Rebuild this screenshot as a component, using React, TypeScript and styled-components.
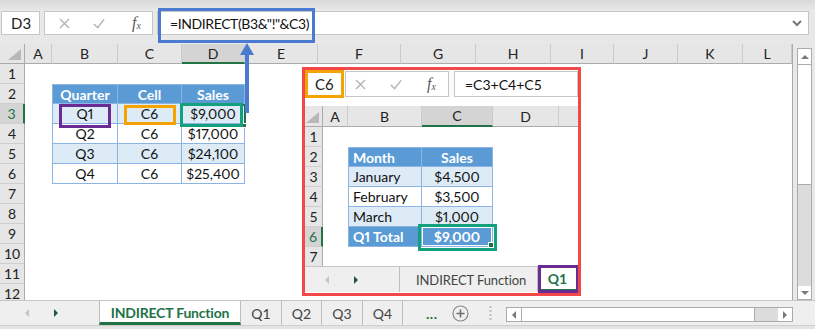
import React from 'react';
import styled, { createGlobalStyle, css } from 'styled-components';

const GREEN = '#217346';
const TABLE_BLUE = '#5b9bd5';
const BAND = '#ddebf7';
const LINE = '#8db4e2';
const FONT = 'Lato, "Open Sans", "Liberation Sans", sans-serif';

const GlobalStyle = createGlobalStyle`
  html, body { margin: 0; padding: 0; }
  body { background: #e8e8e8; font-family: ${FONT}; overflow: hidden; }
  * { box-sizing: border-box; }
`;

type Col = { label: string; width: number };
type Tone = 'head' | 'band' | 'plain' | 'total';
type CellSpec = { text: string; tone: Tone; align: 'left' | 'center'; left: boolean; top: boolean; active?: boolean };

const MAIN_COLS: Col[] = [
  { label: 'A', width: 27 }, { label: 'B', width: 66 }, { label: 'C', width: 64 }, { label: 'D', width: 63 },
  { label: 'E', width: 73 }, { label: 'F', width: 83 }, { label: 'G', width: 75 }, { label: 'H', width: 75 },
  { label: 'I', width: 63 }, { label: 'J', width: 64 }, { label: 'K', width: 65 }, { label: 'L', width: 49 },
];
const INNER_COLS: Col[] = [
  { label: 'A', width: 25 }, { label: 'B', width: 74 }, { label: 'C', width: 71 }, { label: 'D', width: 66 }, { label: '', width: 60 },
];

const MAIN_TABLE = [
  ['Quarter', 'Cell', 'Sales'],
  ['Q1', 'C6', '$9,000'],
  ['Q2', 'C6', '$17,000'],
  ['Q3', 'C6', '$24,100'],
  ['Q4', 'C6', '$25,400'],
];
const INNER_TABLE = [
  ['Month', 'Sales'],
  ['January', '$4,500'],
  ['February', '$3,500'],
  ['March', '$1,000'],
  ['Q1 Total', '$9,000'],
];

const mainCell = (r: number, c: number): CellSpec | null => {
  if (r < 2 || r > 6 || c < 1 || c > 3) return null;
  return {
    text: MAIN_TABLE[r - 2][c - 1],
    tone: r === 2 ? 'head' : r % 2 === 1 ? 'band' : 'plain',
    align: 'center',
    left: c === 1,
    top: r === 2,
  };
};
const innerCell = (r: number, c: number): CellSpec | null => {
  if (r < 2 || r > 6 || c < 1 || c > 2) return null;
  return {
    text: INNER_TABLE[r - 2][c - 1],
    tone: r === 2 ? 'head' : r === 6 ? 'total' : r % 2 === 1 ? 'band' : 'plain',
    align: c === 1 ? 'left' : 'center',
    left: c === 1,
    top: r === 2,
    active: r === 6 && c === 2,
  };
};

/* ---------- frame ---------- */

const Screen = styled.div`
  position: relative;
  width: 815px;
  height: 329px;
  display: flex;
  flex-direction: column;
  background: #e8e8e8;
  overflow: hidden;
  font-family: ${FONT};
`;

const TopStrip = styled.div`
  height: 11px;
  flex: none;
  background: linear-gradient(#d9d9d9, #e9e9e9);
`;

/* ---------- formula bar ---------- */

const FormulaRow = styled.div<{ $h: number; $mt: number; $mb: number; $pl: number; $pr: number; $bg: string }>`
  display: flex;
  align-items: stretch;
  flex: none;
  height: ${p => p.$h}px;
  margin: ${p => p.$mt}px 0 ${p => p.$mb}px 0;
  padding: 0 ${p => p.$pr}px 0 ${p => p.$pl}px;
  background: ${p => p.$bg};
`;

const NameBox = styled.div<{ $w: number }>`
  width: ${p => p.$w}px;
  flex: none;
  display: flex;
  align-items: center;
  padding-left: 9px;
  background: #fff;
  border: 1px solid #c6c6c6;
  font-size: 15px;
  color: #222;
`;

const FxBox = styled.div<{ $w: number; $ml: number; $pl: number; $gap: number }>`
  width: ${p => p.$w}px;
  margin-left: ${p => p.$ml}px;
  flex: none;
  display: flex;
  align-items: center;
  gap: ${p => p.$gap}px;
  padding-left: ${p => p.$pl}px;
  background: #fff;
  border: 1px solid #c6c6c6;
`;

const IconSlot = styled.span`
  width: 12px;
  height: 12px;
  display: flex;
  align-items: center;
  justify-content: center;
`;

const Fx = styled.span<{ $ml: number }>`
  width: 14px;
  margin-left: ${p => p.$ml}px;
  font-family: "Liberation Serif", "DejaVu Serif", serif;
  font-style: italic;
  font-size: 16px;
  color: #5a5a5a;
  line-height: 1;
  sub {
    font-size: 10px;
    vertical-align: baseline;
    position: relative;
    top: 1px;
  }
`;

const FormulaInput = styled.div<{ $ml: number; $pl: number; $fs: number; $ls: number }>`
  flex: 1;
  margin-left: ${p => p.$ml}px;
  display: flex;
  align-items: center;
  justify-content: space-between;
  padding: 0 6px 0 ${p => p.$pl}px;
  background: #fff;
  border: 1px solid #c6c6c6;
  font-size: ${p => p.$fs}px;
  letter-spacing: ${p => p.$ls}px;
  color: #111;
  white-space: nowrap;
`;

/* ---------- grid ---------- */

const SheetArea = styled.div`
  display: flex;
  align-items: flex-start;
  flex: none;
  height: 256px;
`;

const GridFrame = styled.div<{ $cols: string; $headH: number; $rowH: number; $h: number; $edge: boolean }>`
  display: grid;
  grid-template-columns: ${p => p.$cols};
  grid-template-rows: ${p => p.$headH}px;
  grid-auto-rows: ${p => p.$rowH}px;
  align-content: start;
  height: ${p => p.$h}px;
  flex: none;
  overflow: hidden;
  background: #fff;
  border-right: ${p => (p.$edge ? '1px solid #ababab' : 'none')};
`;

const Corner = styled.div`
  position: relative;
  background: #e6e6e6;
  border-right: 1px solid #ababab;
  border-bottom: 1px solid #ababab;
  &::after {
    content: '';
    position: absolute;
    right: 3px;
    bottom: 3px;
    border-left: 13px solid transparent;
    border-bottom: 11px solid #b8b8b8;
  }
`;

const ColHead = styled.div<{ $sel: boolean }>`
  display: flex;
  align-items: center;
  justify-content: center;
  font-size: 14px;
  color: #222;
  background: ${p => (p.$sel ? '#d4d4d4' : '#e6e6e6')};
  border-right: 1px solid #cbcbcb;
  border-bottom: ${p => (p.$sel ? `2px solid ${GREEN}` : '1px solid #ababab')};
  white-space: nowrap;
`;

const RowHead = styled.div<{ $sel: boolean }>`
  display: flex;
  align-items: center;
  justify-content: center;
  font-size: 14px;
  color: ${p => (p.$sel ? GREEN : '#222')};
  background: ${p => (p.$sel ? '#d4d4d4' : '#e6e6e6')};
  border-bottom: 1px solid #cfcfcf;
  border-right: ${p => (p.$sel ? `2px solid ${GREEN}` : '1px solid #ababab')};
`;

const Blank = styled.div`
  background: #fff;
`;

const TableCell = styled.div<{ $tone: Tone; $align: 'left' | 'center'; $left: boolean; $top: boolean; $active?: boolean }>`
  position: relative;
  display: flex;
  align-items: center;
  justify-content: ${p => (p.$align === 'left' ? 'flex-start' : 'center')};
  padding: 0 4px;
  font-size: 14px;
  font-variant-numeric: proportional-nums;
  white-space: nowrap;
  background: ${p => (p.$tone === 'head' || p.$tone === 'total' ? TABLE_BLUE : p.$tone === 'band' ? BAND : '#fff')};
  color: ${p => (p.$tone === 'head' || p.$tone === 'total' ? '#fff' : '#111')};
  font-weight: ${p => (p.$tone === 'head' || p.$tone === 'total' ? 700 : 400)};
  border-right: 1px solid ${LINE};
  border-bottom: 1px solid ${LINE};
  border-left: ${p => (p.$left ? `1px solid ${LINE}` : 'none')};
  border-top: ${p => (p.$top ? `1px solid ${LINE}` : 'none')};
  ${p =>
    p.$active &&
    css`
      box-shadow: inset 0 0 0 1px #ffffff;
      &::after {
        content: '';
        position: absolute;
        right: -2px;
        bottom: -2px;
        width: 4px;
        height: 4px;
        background: #1d6f42;
        border: 1px solid #fff;
      }
    `}
`;

type GridProps = {
  cols: Col[];
  rowHeadW: number;
  headH: number;
  rowH: number;
  rows: number;
  height: number;
  selCol: number;
  selRow: number;
  edge: boolean;
  cell: (r: number, c: number) => CellSpec | null;
};

function SheetGrid({ cols, rowHeadW, headH, rowH, rows, height, selCol, selRow, edge, cell }: GridProps) {
  const template = [rowHeadW, ...cols.map(c => c.width)].map(w => `${w}px`).join(' ');
  const items: React.ReactNode[] = [<Corner key="corner" />];
  cols.forEach((c, i) =>
    items.push(
      <ColHead key={`h${i}`} $sel={i === selCol}>
        {c.label}
      </ColHead>,
    ),
  );
  for (let r = 1; r <= rows; r++) {
    items.push(
      <RowHead key={`r${r}`} $sel={r === selRow}>
        {r}
      </RowHead>,
    );
    cols.forEach((_, c) => {
      const spec = cell(r, c);
      items.push(
        spec ? (
          <TableCell key={`c${r}-${c}`} $tone={spec.tone} $align={spec.align} $left={spec.left} $top={spec.top} $active={spec.active}>
            {spec.text}
          </TableCell>
        ) : (
          <Blank key={`c${r}-${c}`} />
        ),
      );
    });
  }
  return (
    <GridFrame $cols={template} $headH={headH} $rowH={rowH} $h={height} $edge={edge}>
      {items}
    </GridFrame>
  );
}

/* ---------- scrollbars ---------- */

const VScroll = styled.div`
  width: 15px;
  height: 252px;
  margin: 4px 0 0 4px;
  display: flex;
  flex-direction: column;
  flex: none;
  background: #dcdcdc;
  border: 1px solid #ababab;
`;

const ScrollBtn = styled.div<{ $size: number; $vertical: boolean }>`
  flex: none;
  ${p => (p.$vertical ? `height: ${p.$size}px;` : `width: ${p.$size}px;`)}
  display: flex;
  align-items: center;
  justify-content: center;
  background: #fff;
`;

const Thumb = styled.div<{ $size: number; $vertical: boolean }>`
  flex: none;
  ${p => (p.$vertical ? `height: ${p.$size}px;` : `width: ${p.$size}px;`)}
  background: #fff;
  ${p =>
    p.$vertical
      ? 'border-top: 1px solid #ababab; border-bottom: 1px solid #ababab;'
      : 'border-left: 1px solid #ababab; border-right: 1px solid #ababab;'}
`;

const Track = styled.div`
  flex: 1;
`;

const HScroll = styled.div`
  width: 287px;
  height: 15px;
  margin-top: 6px;
  align-self: flex-start;
  display: flex;
  flex: none;
  background: #dcdcdc;
  border: 1px solid #ababab;
`;

const Arrow = ({ dir, color }: { dir: 'up' | 'down' | 'left' | 'right'; color: string }) => {
  const pts = {
    up: '0,5 4,1 8,5',
    down: '0,1 4,5 8,1',
    left: '5,0 1,4 5,8',
    right: '1,0 5,4 1,8',
  }[dir];
  const horizontal = dir === 'left' || dir === 'right';
  return (
    <svg width={horizontal ? 6 : 8} height={horizontal ? 8 : 6} viewBox={horizontal ? '0 0 6 8' : '0 0 8 6'}>
      <polygon points={pts} fill={color} />
    </svg>
  );
};

/* ---------- tab bars ---------- */

const TabBar = styled.div<{ $h: number }>`
  display: flex;
  align-items: stretch;
  flex: none;
  height: ${p => p.$h}px;
  background: #efefef;
  border-top: 1px solid #c6c6c6;
`;

const TabNav = styled.div<{ $w: number; $pl: number }>`
  width: ${p => p.$w}px;
  flex: none;
  display: flex;
  align-items: center;
  gap: 23px;
  padding-left: ${p => p.$pl}px;
`;

const Tab = styled.div<{ $w?: number; $active?: boolean; $first?: boolean; $fs: number; $pl?: number; $ls?: number }>`
  ${p => (p.$w ? `width: ${p.$w}px; flex: none;` : 'flex: 1;')}
  display: flex;
  align-items: center;
  justify-content: ${p => (p.$pl !== undefined ? 'flex-start' : 'center')};
  padding-left: ${p => p.$pl ?? 0}px;
  padding-top: ${p => (p.$active ? 1 : 0)}px;
  font-size: ${p => p.$fs}px;
  letter-spacing: ${p => p.$ls ?? 0}px;
  white-space: nowrap;
  color: ${p => (p.$active ? GREEN : '#444')};
  font-weight: ${p => (p.$active ? 700 : 400)};
  background: ${p => (p.$active ? '#fff' : 'transparent')};
  border-right: 1px solid #bdbdbd;
  border-left: ${p => (p.$first ? '1px solid #bdbdbd' : 'none')};
  border-bottom: ${p => (p.$active ? `3px solid ${GREEN}` : 'none')};
`;

const TabExtras = styled.div`
  width: 103px;
  flex: none;
  display: flex;
  align-items: center;
  padding-left: 23px;
`;

const More = styled.span`
  width: 14px;
  color: ${GREEN};
  font-weight: 700;
  font-size: 14px;
  letter-spacing: 0.5px;
  margin-top: 1px;
`;

const AddSheet = styled.span`
  display: flex;
  margin-left: 12px;
`;

const GripWrap = styled.span`
  display: flex;
  margin-left: 20px;
`;

const BottomStrip = styled.div`
  flex: 1;
  background: #e3e3e3;
  border-top: 1px solid #cfcfcf;
`;

/* ---------- overlays ---------- */

const Mark = styled.div<{ $x: number; $y: number; $w: number; $h: number; $color: string; $bw?: number }>`
  position: absolute;
  left: ${p => p.$x}px;
  top: ${p => p.$y}px;
  width: ${p => p.$w}px;
  height: ${p => p.$h}px;
  border: ${p => p.$bw ?? 3}px solid ${p => p.$color};
  pointer-events: none;
`;

const Handle = styled.div<{ $x: number; $y: number }>`
  position: absolute;
  left: ${p => p.$x}px;
  top: ${p => p.$y}px;
  width: 5px;
  height: 5px;
  background: ${GREEN};
  border: 1px solid #fff;
`;

const PointerArrow = styled.svg`
  position: absolute;
  left: 239px;
  top: 42px;
`;

const Inset = styled.div`
  position: absolute;
  left: 302px;
  top: 67px;
  width: 279px;
  height: 229px;
  border: 3px solid #f34848;
  background: #fff;
  display: flex;
  flex-direction: column;
  overflow: hidden;
`;

const InsetGridWrap = styled.div`
  margin-top: 9px;
  height: 160px;
  overflow: hidden;
  flex: none;
`;

const CancelIcon = () => (
  <svg width="11" height="11" viewBox="0 0 11 11">
    <path d="M1 1 L10 10 M10 1 L1 10" stroke="#b3b3b3" strokeWidth="1.4" fill="none" />
  </svg>
);
const ConfirmIcon = () => (
  <svg width="13" height="11" viewBox="0 0 13 11">
    <path d="M1 6 L5 10 L12 1" stroke="#b3b3b3" strokeWidth="1.6" fill="none" />
  </svg>
);
const Chevron = () => (
  <svg width="10" height="7" viewBox="0 0 10 7">
    <path d="M1 1 L5 5 L9 1" stroke="#777" strokeWidth="2" fill="none" />
  </svg>
);
const PlusCircle = () => (
  <svg width="17" height="17" viewBox="0 0 17 17">
    <circle cx="8.5" cy="8.5" r="7.5" stroke="#8a8a8a" strokeWidth="1.2" fill="none" />
    <path d="M8.5 4.5 V12.5 M4.5 8.5 H12.5" stroke="#6f6f6f" strokeWidth="1.6" />
  </svg>
);
const Grip = () => (
  <svg width="3" height="14" viewBox="0 0 3 14">
    {[1, 5, 9, 13].map(y => (
      <rect key={y} x="0.5" y={y - 1} width="2" height="2" fill="#bdbdbd" />
    ))}
  </svg>
);

export default function App() {
  return (
    <>
      <GlobalStyle />
      <Screen>
        <TopStrip />
        <FormulaRow $h={24} $mt={0} $mb={9} $pl={1} $pr={6} $bg="transparent">
          <NameBox $w={39}>D3</NameBox>
          <FxBox $w={109} $ml={4} $pl={13} $gap={23}>
            <IconSlot>
              <CancelIcon />
            </IconSlot>
            <IconSlot>
              <ConfirmIcon />
            </IconSlot>
            <Fx $ml={4}>
              f<sub>x</sub>
            </Fx>
          </FxBox>
          <FormulaInput $ml={4} $pl={12} $fs={14} $ls={-0.4}>
            <span>=INDIRECT(B3&amp;"!"&amp;C3)</span>
            <Chevron />
          </FormulaInput>
        </FormulaRow>

        <SheetArea>
          <SheetGrid
            cols={MAIN_COLS}
            rowHeadW={25}
            headH={20}
            rowH={20}
            rows={12}
            height={256}
            selCol={3}
            selRow={3}
            edge
            cell={mainCell}
          />
          <VScroll>
            <ScrollBtn $size={15} $vertical>
              <Arrow dir="up" color="#7a7a7a" />
            </ScrollBtn>
            <Thumb $size={121} $vertical />
            <Track />
            <ScrollBtn $size={13} $vertical>
              <Arrow dir="down" color="#7a7a7a" />
            </ScrollBtn>
          </VScroll>
        </SheetArea>

        <TabBar $h={25}>
          <TabNav $w={99} $pl={24}>
            <Arrow dir="left" color="#c4c4c4" />
            <Arrow dir="right" color="#1e5a38" />
          </TabNav>
          <Tab $w={142} $active $first $fs={14} $ls={-0.2}>
            INDIRECT Function
          </Tab>
          <Tab $w={41} $fs={14}>Q1</Tab>
          <Tab $w={40} $fs={14}>Q2</Tab>
          <Tab $w={41} $fs={14}>Q3</Tab>
          <Tab $w={40} $fs={14}>Q4</Tab>
          <TabExtras>
            <More>...</More>
            <AddSheet>
              <PlusCircle />
            </AddSheet>
            <GripWrap>
              <Grip />
            </GripWrap>
          </TabExtras>
          <HScroll>
            <ScrollBtn $size={14} $vertical={false}>
              <Arrow dir="left" color="#7a7a7a" />
            </ScrollBtn>
            <Thumb $size={234} $vertical={false} />
            <Track />
            <ScrollBtn $size={14} $vertical={false}>
              <Arrow dir="right" color="#7a7a7a" />
            </ScrollBtn>
          </HScroll>
        </TabBar>
        <BottomStrip />

        <Mark $x={181} $y={104} $w={65} $h={23} $color={GREEN} $bw={2} />
        <Handle $x={242} $y={123} />
        <Mark $x={59} $y={104} $w={52} $h={24} $color="#6b2b94" />
        <Mark $x={124} $y={105} $w={52} $h={20} $color="#f5a300" />
        <Mark $x={180} $y={103} $w={63} $h={24} $color="#13a07c" />
        <Mark $x={158} $y={8} $w={157} $h={35} $color="#4a7bd0" />
        <PointerArrow width="16" height="72" viewBox="0 0 16 72">
          <polygon points="8,1 1,13 15,13" fill="#4a7bd0" />
          <rect x="6" y="12" width="4" height="59" fill="#4a7bd0" />
        </PointerArrow>

        <Inset>
          <FormulaRow $h={26} $mt={1} $mb={0} $pl={0} $pr={0} $bg="#fafafa">
            <NameBox $w={39}>C6</NameBox>
            <FxBox $w={104} $ml={1} $pl={8} $gap={24}>
              <IconSlot>
                <CancelIcon />
              </IconSlot>
              <IconSlot>
                <ConfirmIcon />
              </IconSlot>
              <Fx $ml={1}>
                f<sub>x</sub>
              </Fx>
            </FxBox>
            <FormulaInput $ml={5} $pl={10} $fs={14} $ls={0}>
              <span>=C3+C4+C5</span>
            </FormulaInput>
          </FormulaRow>
          <InsetGridWrap>
            <SheetGrid
              cols={INNER_COLS}
              rowHeadW={18}
              headH={21}
              rowH={20}
              rows={7}
              height={160}
              selCol={2}
              selRow={6}
              edge={false}
              cell={innerCell}
            />
          </InsetGridWrap>
          <TabBar $h={26}>
            <TabNav $w={94} $pl={19}>
              <Arrow dir="left" color="#c4c4c4" />
              <Arrow dir="right" color="#1e5a38" />
            </TabNav>
            <Tab $w={139} $first $fs={13} $pl={16} $ls={-0.1}>
              INDIRECT Function
            </Tab>
            <Tab $active $fs={14}>
              Q1
            </Tab>
          </TabBar>
          <Mark $x={0} $y={0} $w={39} $h={28} $color="#f5a300" />
          <Mark $x={113} $y={154} $w={79} $h={27} $color="#13a07c" />
          <Mark $x={233} $y={195} $w={41} $h={28} $color="#6b2b94" />
        </Inset>
      </Screen>
    </>
  );
}
